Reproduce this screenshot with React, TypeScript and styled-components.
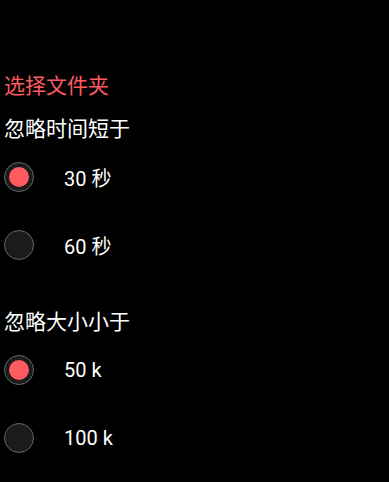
import { useState } from 'react';
import styled, { createGlobalStyle } from 'styled-components';

const GlobalStyle = createGlobalStyle`
  html, body {
    margin: 0;
    padding: 0;
    background: #000;
  }
  body {
    font-family: Roboto, "Noto Sans CJK SC", sans-serif;
  }
`;

type Option = { value: string; label: string };

const timeOptions: Option[] = [
  { value: '30', label: '30 秒' },
  { value: '60', label: '60 秒' },
];

const sizeOptions: Option[] = [
  { value: '50', label: '50 k' },
  { value: '100', label: '100 k' },
];

const RadioGroup = ({
  options,
  selected,
  onSelect,
}: {
  options: Option[];
  selected: string;
  onSelect: (v: string) => void;
}) => (
  <Group>
    {options.map((o) => (
      <RadioRow key={o.value} onClick={() => onSelect(o.value)}>
        <Circle>{selected === o.value && <Dot />}</Circle>
        <RadioLabel>{o.label}</RadioLabel>
      </RadioRow>
    ))}
  </Group>
);

const App = () => {
  const [time, setTime] = useState('30');
  const [size, setSize] = useState('50');

  return (
    <Container>
      <GlobalStyle />
      <FolderLink>选择文件夹</FolderLink>
      <SectionLabel>忽略时间短于</SectionLabel>
      <RadioGroup options={timeOptions} selected={time} onSelect={setTime} />
      <SectionLabel $spaced>忽略大小小于</SectionLabel>
      <RadioGroup options={sizeOptions} selected={size} onSelect={setSize} />
    </Container>
  );
};

export default App;

const Container = styled.div`
  display: flex;
  flex-direction: column;
  padding: 70px 0 0 4px;
  min-height: 100vh;
  box-sizing: border-box;
  background: #000;
`;

const FolderLink = styled.div`
  color: #ff5a60;
  font-family: "Noto Sans CJK SC", sans-serif;
  font-size: 21px;
  line-height: 28px;
  margin-bottom: 15px;
`;

const SectionLabel = styled.div<{ $spaced?: boolean }>`
  color: #fff;
  font-family: "Noto Sans CJK SC", sans-serif;
  font-size: 21px;
  line-height: 28px;
  margin-top: ${(p) => (p.$spaced ? '27px' : '0')};
  margin-bottom: 2px;
`;

const Group = styled.div`
  display: flex;
  flex-direction: column;
`;

const RadioRow = styled.div`
  display: flex;
  align-items: center;
  height: 68px;
  cursor: pointer;
`;

const Circle = styled.div`
  width: 30px;
  height: 30px;
  box-sizing: border-box;
  border-radius: 50%;
  border: 1.5px solid #666;
  background: #1b1b1b;
  display: flex;
  align-items: center;
  justify-content: center;
`;

const Dot = styled.div`
  width: 20px;
  height: 20px;
  border-radius: 50%;
  background: #ff5a60;
`;

const RadioLabel = styled.span`
  color: #fff;
  font-family: Roboto, "Noto Sans CJK SC", sans-serif;
  font-size: 20px;
  margin-left: 30px;
`;
